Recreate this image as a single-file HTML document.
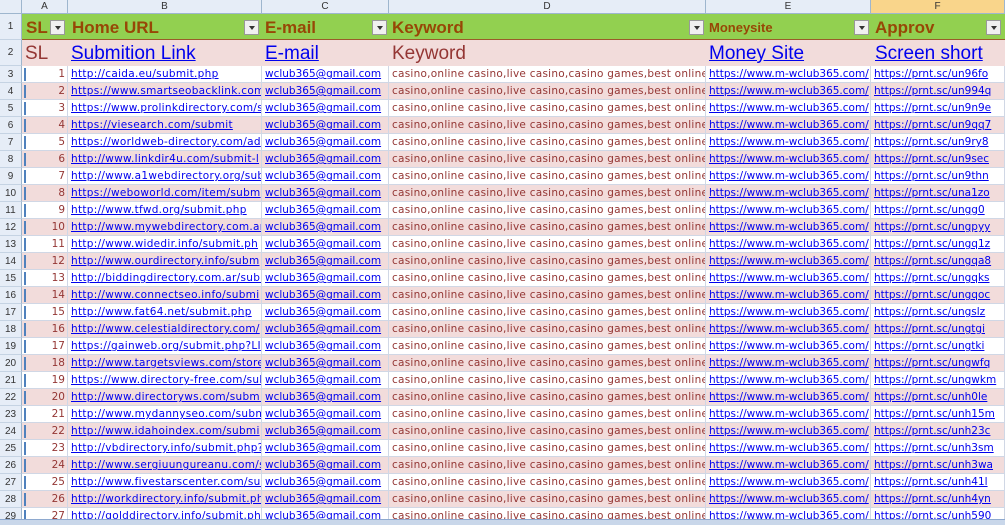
<!DOCTYPE html>
<html><head><meta charset="utf-8"><style>
*{margin:0;padding:0;box-sizing:border-box}
body{width:1005px;height:525px;overflow:hidden;background:#fff;font-family:"Liberation Sans",sans-serif;position:relative}
.ch{position:absolute;top:0;height:14px;background:#e6edf7;border-right:1px solid #9eb6ce;border-bottom:1px solid #9eb6ce;font-size:10px;color:#333;text-align:center;line-height:13px}
.rh{position:absolute;left:0;width:22px;background:#e6edf7;border-right:1px solid #9eb6ce;border-bottom:1px solid #c5d3e3;font-size:10px;color:#333;text-align:center}
.r{position:absolute;left:22px;width:983px;height:17px;font-family:"DejaVu Sans",sans-serif;font-size:10.5px;line-height:17px;white-space:nowrap}
.r div{position:absolute;top:0;height:17px;overflow:hidden;border-right:1px solid #d0d7e5;border-bottom:1px solid #d0d7e5}
.p{background:#f2dcdb}
.a{left:0;width:46px;text-align:right;padding-right:2px;color:#943634}
.a:before{content:"";position:absolute;left:2px;top:2px;width:2px;height:13px;background:#4f81bd}
.b{left:46px;width:194px;padding-left:3px;letter-spacing:0.3px}
.c{left:240px;width:127px;padding-left:3px}
.d{left:367px;width:317px;padding-left:3px;color:#943634;letter-spacing:0.25px}
.e{left:684px;width:165px;padding-left:3px}
.f{left:849px;width:134px;padding-left:3px}
.l{color:#0000ee;text-decoration:underline}
.dd{position:absolute;width:15px;height:15px;background:#f0f0f0;border:1px solid #999;top:6px}
.dd:after{content:"";position:absolute;left:4px;top:5px;border:3px solid transparent;border-top:4px solid #333}
</style></head><body>
<div class="ch" style="left:0;width:22px"></div>
<div class="ch" style="left:22px;width:46px">A</div>
<div class="ch" style="left:68px;width:194px">B</div>
<div class="ch" style="left:262px;width:127px">C</div>
<div class="ch" style="left:389px;width:317px">D</div>
<div class="ch" style="left:706px;width:165px">E</div>
<div class="ch" style="left:871px;width:134px;background:#f9d58b">F</div>

<div class="rh" style="top:14px;height:26px;line-height:26px">1</div>
<div style="position:absolute;left:22px;top:14px;width:983px;height:26px;background:#92d050;border-bottom:1px solid #9b5a2a;font-weight:bold;color:#974706;font-size:17px;line-height:27px">
<span style="position:absolute;left:4px">SL</span><div class="dd" style="left:28px"></div>
<span style="position:absolute;left:50px">Home URL</span><div class="dd" style="left:222px"></div>
<span style="position:absolute;left:243px">E-mail</span><div class="dd" style="left:350px"></div>
<span style="position:absolute;left:370px">Keyword</span><div class="dd" style="left:667px"></div>
<span style="position:absolute;left:687px;font-size:13px">Moneysite</span><div class="dd" style="left:832px"></div>
<span style="position:absolute;left:853px">Approv</span><div class="dd" style="left:964px"></div>
</div>
<div class="rh" style="top:40px;height:26px;line-height:26px">2</div>
<div style="position:absolute;left:22px;top:40px;width:983px;height:26px;background:#f2dcdb;font-size:19px;line-height:27px">
<span style="position:absolute;left:3px;color:#943634">SL</span>
<span class="l" style="position:absolute;left:49px">Submition Link</span>
<span class="l" style="position:absolute;left:243px">E-mail</span>
<span style="position:absolute;left:370px;color:#943634">Keyword</span>
<span class="l" style="position:absolute;left:687px">Money Site</span>
<span class="l" style="position:absolute;left:853px">Screen short</span>
</div>
<div id="rows"></div>
<div style="position:absolute;left:0;top:519px;width:1005px;height:6px;background:#c9d7ea;border-top:1px solid #8ea9cf"></div>
<script>
var u=["http://caida.eu/submit.php","https://www.smartseobacklink.com","https://www.prolinkdirectory.com/s","https://viesearch.com/submit","https://worldweb-directory.com/ad","http://www.linkdir4u.com/submit-l","http://www.a1webdirectory.org/sub","https://weboworld.com/item/subm","http://www.tfwd.org/submit.php","http://www.mywebdirectory.com.ar","http://www.widedir.info/submit.ph","http://www.ourdirectory.info/subm","http://biddingdirectory.com.ar/subr","http://www.connectseo.info/submi","http://www.fat64.net/submit.php","http://www.celestialdirectory.com/","https://gainweb.org/submit.php?LI","http://www.targetsviews.com/store","https://www.directory-free.com/sub","http://www.directoryws.com/submi","http://www.mydannyseo.com/subm","http://www.idahoindex.com/submi","http://vbdirectory.info/submit.php?","http://www.sergiuungureanu.com/s","http://www.fivestarscenter.com/sul","http://workdirectory.info/submit.ph","http://golddirectory.info/submit.ph"];
var s=["un96fo","un994q","un9n9e","un9qq7","un9ry8","un9sec","un9thn","una1zo","ungg0","ungpyy","ungq1z","ungqa8","ungqks","ungqoc","ungslz","ungtgi","ungtki","ungwfq","ungwkm","unh0le","unh15m","unh23c","unh3sm","unh3wa","unh41l","unh4yn","unh590"];
var h="";
for(var i=0;i<27;i++){var t=66+i*17,p=i%2?" p":"";
h+='<div class="rh" style="top:'+t+'px;height:17px;line-height:17px">'+(i+3)+'</div><div class="r" style="top:'+t+'px"><div class="a'+p+'">'+(i+1)+'</div><div class="b l'+p+'">'+u[i]+'</div><div class="c l'+p+'">wclub365@gmail.com</div><div class="d'+p+'">casino,online casino,live casino,casino games,best online casino</div><div class="e l'+p+'">https://www.m-wclub365.com/</div><div class="f l'+p+'">https://prnt.sc/'+s[i]+'</div></div>';}
document.getElementById("rows").innerHTML=h;
</script>
</body></html>
